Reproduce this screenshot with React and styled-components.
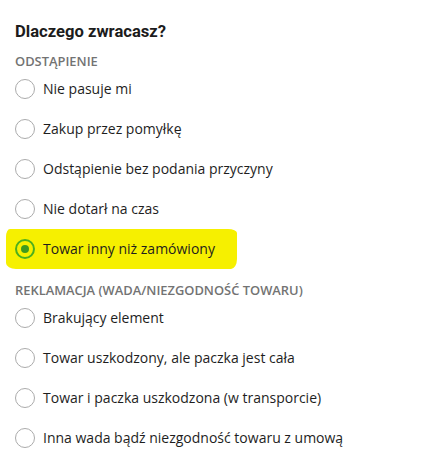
import React, { useState } from "react";
import styled, { createGlobalStyle } from "styled-components";

const Global = createGlobalStyle`
  html, body { margin: 0; padding: 0; background: #ffffff; }
  body { font-family: "Open Sans", "Liberation Sans", sans-serif; }
`;

const Page = styled.div`
  padding: 21px 15px 0 15px;
  display: flex;
  flex-direction: column;
`;

const Title = styled.h2`
  margin: 0;
  font-family: Roboto, "Liberation Sans", sans-serif;
  font-weight: 700;
  font-size: 16.6px;
  line-height: 22px;
  color: #1c1c1c;
`;

const SectionLabel = styled.div`
  margin-top: ${(p) => p.$top}px;
  font-family: "Open Sans", sans-serif;
  font-weight: 600;
  font-size: 12.9px;
  line-height: 16px;
  color: #737373;
  text-transform: uppercase;
`;

const List = styled.div`
  display: flex;
  flex-direction: column;
`;

const Row = styled.label`
  display: flex;
  align-items: center;
  gap: 8px;
  height: 40px;
  cursor: pointer;
  width: fit-content;
  ${(p) =>
    p.$marked &&
    `
    margin-left: -9px;
    padding: 0 22px 0 9px;
    background: #f6f000;
    border-radius: 4px 9px 6px 10px / 8px 4px 10px 6px;
  `}
`;

const Circle = styled.span`
  box-sizing: border-box;
  width: 20px;
  height: 20px;
  border-radius: 50%;
  border: ${(p) => (p.$on ? "2px solid #4caf1e" : "1px solid #ababab")};
  background: ${(p) => (p.$on ? "transparent" : "#fff")};
  display: flex;
  align-items: center;
  justify-content: center;
  flex: none;
  &::after {
    content: "";
    width: 8px;
    height: 8px;
    border-radius: 50%;
    background: #3e9a1e;
    display: ${(p) => (p.$on ? "block" : "none")};
  }
`;

const Text = styled.span`
  font-size: 14px;
  color: #1e1e1e;
  line-height: 20px;
`;

const sections = [
  {
    label: "Odstąpienie",
    top: 10,
    items: [
      "Nie pasuje mi",
      "Zakup przez pomyłkę",
      "Odstąpienie bez podania przyczyny",
      "Nie dotarł na czas",
      "Towar inny niż zamówiony",
    ],
  },
  {
    label: "Reklamacja (wada/niezgodność towaru)",
    top: 13,
    items: [
      "Brakujący element",
      "Towar uszkodzony, ale paczka jest cała",
      "Towar i paczka uszkodzona (w transporcie)",
      "Inna wada bądź niezgodność towaru z umową",
    ],
  },
];

export default function App() {
  const [sel, setSel] = useState("Towar inny niż zamówiony");
  return (
    <Page>
      <Global />
      <Title>Dlaczego zwracasz?</Title>
      {sections.map((s) => (
        <React.Fragment key={s.label}>
          <SectionLabel $top={s.top}>{s.label}</SectionLabel>
          <List>
            {s.items.map((it) => (
              <Row key={it} $marked={sel === it} onClick={() => setSel(it)}>
                <Circle $on={sel === it} />
                <Text>{it}</Text>
              </Row>
            ))}
          </List>
        </React.Fragment>
      ))}
    </Page>
  );
}
